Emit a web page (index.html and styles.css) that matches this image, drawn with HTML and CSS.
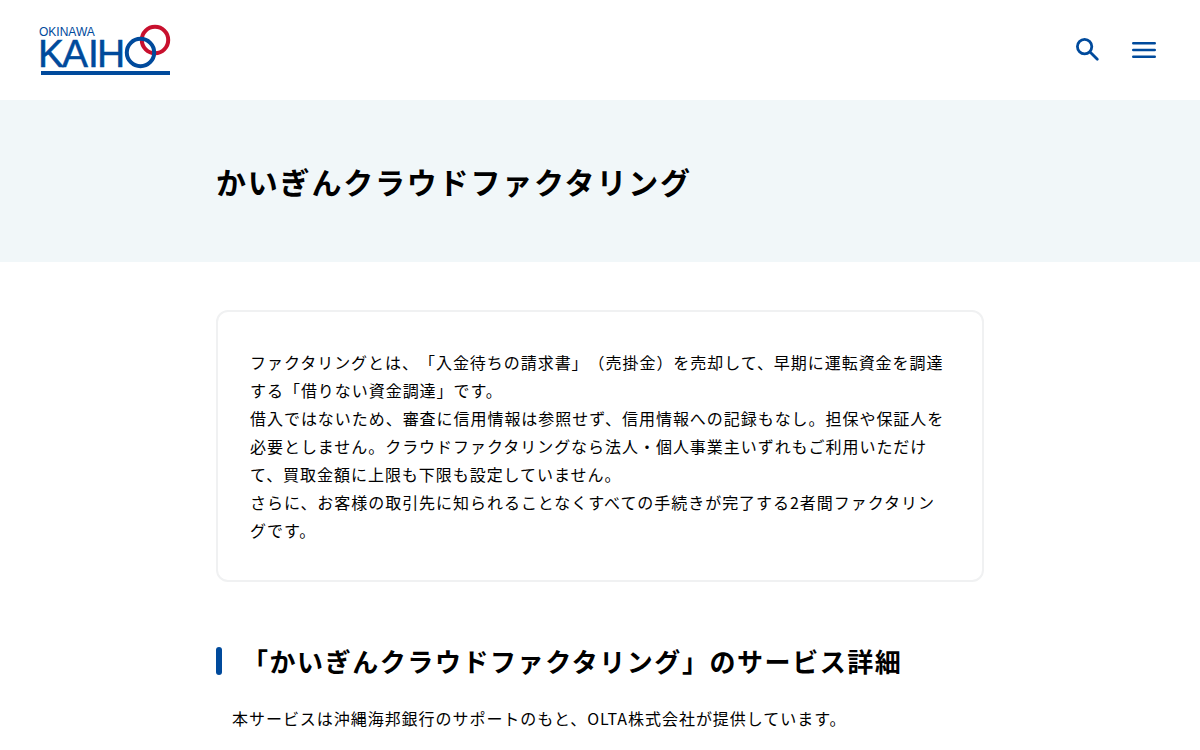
FILE: index.html
```html
<!DOCTYPE html>
<html lang="ja">
<head>
<meta charset="utf-8">
<meta name="viewport" content="width=device-width, initial-scale=1">
<title>かいぎんクラウドファクタリング</title>
<link rel="stylesheet" href="styles.css">
</head>
<body>
<header class="header">
  <a class="logo" href="#" aria-label="OKINAWA KAIHO">
    <svg class="logo-image" viewBox="0 0 130 50" width="130" height="50" aria-hidden="true">
      <text class="logo-small" x="-1" y="11">OKINAWA</text>
      <text class="logo-large" x="-2 22 48 57" y="42">KAIH</text>
      <circle class="ring-red" cx="115" cy="15" r="13.2"/>
      <circle class="ring-blue" cx="100.5" cy="27.5" r="13.7"/>
      <rect class="logo-bar" x="1" y="46" width="129" height="4"/>
    </svg>
  </a>
  <div class="tools">
    <button class="tool" type="button" aria-label="検索">
      <svg class="icon" viewBox="0 0 24 24" width="24" height="24" aria-hidden="true">
        <circle cx="8.6" cy="8.6" r="7.2"/>
        <path d="M14 14L21.3 21.3"/>
      </svg>
    </button>
    <button class="tool" type="button" aria-label="メニュー">
      <svg class="icon" viewBox="0 0 24 24" width="24" height="24" aria-hidden="true">
        <path class="menu-lines" d="M1.2 5.2H22.8M1.2 12H22.8M1.2 18.8H22.8"/>
      </svg>
    </button>
  </div>
</header>
<main>
  <div class="hero">
    <h1 class="container page-title">かいぎんクラウドファクタリング</h1>
  </div>
  <div class="container content">
    <div class="lead">
      <p>ファクタリングとは、「入金待ちの請求書」（売掛金）を売却して、早期に運転資金を調達する「借りない資金調達」です。</p>
      <p>借入ではないため、審査に信用情報は参照せず、信用情報への記録もなし。担保や保証人を必要としません。クラウドファクタリングなら法人・個人事業主いずれもご利用いただけて、買取金額に上限も下限も設定していません。</p>
      <p>さらに、お客様の取引先に知られることなくすべての手続きが完了する2者間ファクタリングです。</p>
    </div>
    <section class="section">
      <h2 class="section-title">「かいぎんクラウドファクタリング」のサービス詳細</h2>
      <p class="section-text">本サービスは沖縄海邦銀行のサポートのもと、OLTA株式会社が提供しています。</p>
    </section>
  </div>
</main>
</body>
</html>
```

FILE: styles.css
```css
* {
  box-sizing: border-box;
}

body {
  margin: 0;
  background: #fff;
  color: #000;
  font-family: "Noto Sans CJK JP", sans-serif;
  font-size: 16px;
  line-height: 28px;
  text-spacing-trim: space-all;
}

h1, h2, p {
  margin: 0;
  letter-spacing: 0.06em;
}

.header {
  display: flex;
  align-items: center;
  justify-content: space-between;
  height: 100px;
  padding: 0 40px;
}

.logo,
.logo-image {
  display: block;
}

.logo-image {
  overflow: visible;
}

.logo-small,
.logo-large {
  fill: #004a9c;
}

.logo-small {
  font-family: "Liberation Sans", Arial, sans-serif;
  font-size: 12px;
}

.logo-large {
  font-family: "Liberation Sans", Arial, sans-serif;
  font-size: 39px;
  stroke: #004a9c;
  stroke-width: 0.5;
}

.ring-red,
.ring-blue {
  fill: none;
  stroke-width: 4;
}

.ring-red {
  stroke: #c8102e;
}

.ring-blue {
  stroke: #004a9c;
}

.logo-bar {
  fill: #004a9c;
}

.tools {
  display: flex;
  gap: 24px;
}

.tool {
  display: block;
  padding: 4px;
  border: 0;
  background: none;
  cursor: pointer;
}

.icon {
  display: block;
  fill: none;
  stroke: #004a9c;
  stroke-width: 2.8;
  stroke-linecap: round;
}

.menu-lines {
  stroke-width: 2.4;
}

.hero {
  padding: 56px 24px;
  background: #f1f7f9;
}

.container {
  max-width: 768px;
  margin: 0 auto;
}

.page-title {
  font-size: 30px;
  line-height: 50px;
}

.content {
  padding: 48px 0;
}

.lead {
  padding: 36px 32px;
  border: 2px solid #f0f1f2;
  border-radius: 12px;
}

.section {
  margin-top: 60px;
}

.section-title {
  display: flex;
  align-items: center;
  gap: 20px;
  font-size: 26px;
  line-height: 38px;
}

.section-title::before {
  content: "";
  flex: none;
  width: 6px;
  height: 28px;
  border-radius: 3px;
  background: #004a9c;
}

.section-text {
  margin-top: 24px;
  padding: 0 16px;
}
```
